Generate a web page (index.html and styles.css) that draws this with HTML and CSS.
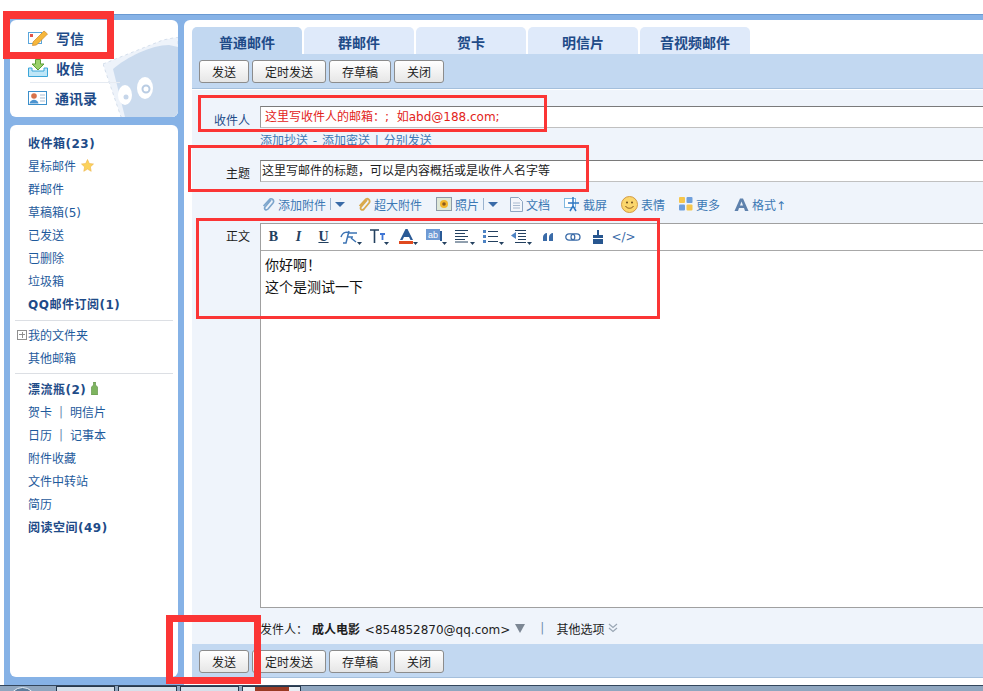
FILE: index.html
```html
<!DOCTYPE html>
<html lang="zh-CN">
<head>
  <meta charset="UTF-8">
  <title>写信</title>
  <link rel="stylesheet" href="styles.css">
</head>
<body>
  <div class="page">
    <div class="sidebar">
      <div class="quick">
        <svg class="stamp" width="75" height="80" viewBox="0 0 75 80">
          <path d="M0 27 L60 3 L75 0 V80 H18 Z" fill="#eef3fa" stroke="#d5dfec" stroke-dasharray="3 3"/>
          <path d="M10 32 C24 20 48 8 66 8 L75 10 V80 H22 Z" fill="#cbdbee"/>
          <ellipse cx="22" cy="58" rx="7" ry="10" fill="#fff"/>
          <ellipse cx="42" cy="51" rx="8" ry="11" fill="#fff"/>
          <circle cx="43" cy="52" r="3.500" fill="none" stroke="#b9cce3" stroke-width="2"/>
          <circle cx="23" cy="60" r="2.500" fill="#c6d6ea"/>
        </svg>
        <a class="quick-item">
          <svg width="20" height="16" viewBox="0 0 20 16">
            <rect x=".5" y="2.500" width="13" height="11" fill="#fff" stroke="#5aa6dc"/>
            <rect x="2" y="4" width="3" height="3" fill="#e2554a"/>
            <path d="M5 12 L16 1 L19.500 4 L8.500 15 L4.500 15.500 Z" fill="#f6b73c" stroke="#cf8a2a" stroke-width=".7"/>
          </svg>
          写信
        </a>
        <a class="quick-item">
          <svg width="20" height="18" viewBox="0 0 20 18">
            <path d="M.5 9 V17.500 H19.500 V9 H16 V12 H4 V9 Z" fill="#bfe6f7" stroke="#3ba6d9"/>
            <path d="M7.500 .5 H12.500 V5 H16 L10 11 L4 5 H7.500 Z" fill="#9ad06a" stroke="#5c9f36"/>
          </svg>
          收信
        </a>
        <div class="quick-line"></div>
        <a class="quick-item">
          <svg width="19" height="14" viewBox="0 0 19 14">
            <rect x=".5" y=".5" width="18" height="13" fill="#fff" stroke="#3b8fcb"/>
            <circle cx="6" cy="5" r="2.800" fill="#d8734a"/>
            <path d="M1.500 12.500 C2.500 7.500 9.500 7.500 10.500 12.500 Z" fill="#4d94d0"/>
            <path d="M12 4 H17 M12 7 H17 M12 10 H17" stroke="#a9bdd2"/>
          </svg>
          通讯录
        </a>
      </div>

      <div class="folders">
        <a class="folder bold">收件箱(23)</a>
        <a class="folder">星标邮件
          <svg width="13" height="13" viewBox="0 0 13 13"><path d="M6.500 .5 L8.300 4.500 L12.500 5 L9.400 7.900 L10.200 12.300 L6.500 10.100 L2.800 12.300 L3.600 7.900 L.5 5 L4.700 4.500 Z" fill="#fbd25c" stroke="#eeb44a" stroke-width=".6"/></svg>
        </a>
        <a class="folder">群邮件</a>
        <a class="folder">草稿箱(5)</a>
        <a class="folder">已发送</a>
        <a class="folder">已删除</a>
        <a class="folder">垃圾箱</a>
        <a class="folder bold">QQ邮件订阅(1)</a>
        <div class="divider"></div>
        <a class="folder tree"><span class="plus"></span>我的文件夹</a>
        <a class="folder">其他邮箱</a>
        <div class="divider low"></div>
        <a class="folder bold">漂流瓶(2)
          <svg width="7" height="13" viewBox="0 0 7 13"><path d="M2.500 0 H4.500 V3 L6.500 5 V13 H.5 V5 L2.500 3 Z" fill="#7eb45f" stroke="#58893f" stroke-width=".6"/></svg>
        </a>
        <a class="folder">贺卡<span class="sep">|</span>明信片</a>
        <a class="folder">日历<span class="sep">|</span>记事本</a>
        <a class="folder">附件收藏</a>
        <a class="folder">文件中转站</a>
        <a class="folder">简历</a>
        <a class="folder bold">阅读空间(49)</a>
      </div>
    </div>

    <div class="main">
      <div class="tabs">
        <a class="tab active">普通邮件</a>
        <a class="tab">群邮件</a>
        <a class="tab">贺卡</a>
        <a class="tab">明信片</a>
        <a class="tab">音视频邮件</a>
      </div>

      <div class="toolbar">
        <button class="btn w50">发送</button>
        <button class="btn w74">定时发送</button>
        <button class="btn w62">存草稿</button>
        <button class="btn w50">关闭</button>
      </div>

      <div class="form">
        <div class="row to-row">
          <label class="label">收件人</label>
          <div class="field red">这里写收件人的邮箱：; &nbsp;如abd@188.com;</div>
        </div>
        <div class="links">添加抄送 - 添加密送 | 分别发送</div>

        <div class="row subject-row">
          <label class="label dark">主题</label>
          <div class="field">这里写邮件的标题，可以是内容概括或是收件人名字等</div>
        </div>

        <div class="attach">
          <span class="att">
            <svg width="14" height="15" viewBox="0 0 14 15"><path d="M10 3 L4 10 C2.500 12 5 14 7 12 L12 6 C14 3 10 0 8 3 L2.500 9" fill="none" stroke="#7da5cc" stroke-width="1.600"/></svg>
            添加附件<span class="bar"></span><span class="down"></span>
          </span>
          <span class="att">
            <svg width="14" height="15" viewBox="0 0 14 15"><path d="M10 3 L4 10 C2.500 12 5 14 7 12 L12 6 C14 3 10 0 8 3 L2.500 9" fill="none" stroke="#d9aa4d" stroke-width="1.800"/></svg>
            超大附件
          </span>
          <span class="att">
            <svg width="16" height="14" viewBox="0 0 16 14"><rect x=".5" y=".5" width="15" height="13" fill="#dfe8d8" stroke="#8d9aa8"/><circle cx="8" cy="7" r="4" fill="#f3b72c"/><circle cx="8" cy="7" r="1.800" fill="#8a5a1e"/></svg>
            照片<span class="bar"></span><span class="down"></span>
          </span>
          <span class="att">
            <svg width="13" height="15" viewBox="0 0 13 15"><path d="M.5 .5 H8.500 L12.500 4.500 V14.500 H.5 Z" fill="#f3f6fb" stroke="#8ea6c2"/><path d="M3 6 H10 M3 8.500 H10 M3 11 H10" stroke="#a8b9cf"/></svg>
            文档
          </span>
          <span class="att">
            <svg width="16" height="15" viewBox="0 0 16 15"><rect x=".5" y="1.500" width="11" height="9" fill="#fff" stroke="#7fb8e0"/><path d="M9 0 V9 L6 14 M9 9 L12 14 M4 6 H15" fill="none" stroke="#2f77c2" stroke-width="1.500"/></svg>
            截屏
          </span>
          <span class="att">
            <svg width="17" height="17" viewBox="0 0 17 17"><circle cx="8.500" cy="8.500" r="8" fill="#fbd66c" stroke="#d29a45"/><circle cx="6" cy="6.500" r="1" fill="#6b4a1e"/><circle cx="11" cy="6.500" r="1" fill="#6b4a1e"/><path d="M4.500 10 C6 13 11 13 12.500 10" fill="none" stroke="#8a5a1e"/></svg>
            表情
          </span>
          <span class="att">
            <svg width="14" height="14" viewBox="0 0 14 14"><rect width="6" height="6" rx="1" fill="#f6c64c"/><rect x="7.500" width="6" height="6" rx="1" fill="#6f9fdc"/><rect y="7.500" width="6" height="6" rx="1" fill="#6f9fdc"/><rect x="7.500" y="7.500" width="6" height="6" rx="1" fill="#f6c64c"/></svg>
            更多
          </span>
          <span class="att">
            <svg width="15" height="13" viewBox="0 0 15 13"><path d="M.5 13 L6 .5 H9 L14.500 13 H11 L10 10 H5 L4 13 Z M6 7.500 H9 L7.500 3.500 Z" fill="#5f82ad" fill-rule="evenodd"/></svg>
            格式↑
          </span>
        </div>

        <div class="row body-row">
          <label class="label dark">正文</label>
          <div class="editor">
            <div class="edit-tools">
              <b class="tool serif">B</b>
              <i class="tool serif">I</i>
              <u class="tool serif">U</u>
              <span class="tool wide">
                <svg width="22" height="16" viewBox="0 0 22 16"><path d="M1 8 C3 2 8 3 10 4 H17 M9 2 L6 14 H3 M8 8 H13 M11 9 L16 13" fill="none" stroke="#3d74b4" stroke-width="1.500"/><path d="M17 13 H22 L19.500 16 Z" fill="#23405f"/></svg>
              </span>
              <span class="tool wide">
                <svg width="20" height="16" viewBox="0 0 20 16"><path d="M0 1 H9 M4.500 1 V14" fill="none" stroke="#23405f" stroke-width="1.600"/><path d="M10 5 H15 M12.500 5 V11" fill="none" stroke="#3d74d4" stroke-width="1.800"/><path d="M14 13 H19 L16.500 16 Z" fill="#23405f"/></svg>
              </span>
              <span class="tool mid">
                <svg width="20" height="16" viewBox="0 0 20 16"><path d="M2 11 L7.500 0 H9.500 L15 11 H12.500 L11 8 H6 L4.500 11 Z" fill="#2a5a96"/><rect x="1" y="12" width="14" height="3" fill="#e0491f"/><path d="M15 13 H20 L17.500 16 Z" fill="#23405f"/></svg>
              </span>
              <span class="tool wide">
                <svg width="21" height="16" viewBox="0 0 21 16"><rect width="14" height="11" fill="#6f9ad4"/><rect x="14" y="2" width="2" height="10" fill="#2a5a96"/><text x="2" y="9" font-size="9" fill="#fff" font-family="Liberation Sans">ab</text><path d="M16 13 H21 L18.500 16 Z" fill="#23405f"/></svg>
              </span>
              <span class="tool mid">
                <svg width="20" height="16" viewBox="0 0 20 16"><path d="M0 1.500 H13 M0 4.500 H10 M0 7.500 H13 M0 10.500 H10 M0 13 H13" stroke="#23405f"/><path d="M15 13 H20 L17.500 16 Z" fill="#23405f"/></svg>
              </span>
              <span class="tool mid">
                <svg width="21" height="16" viewBox="0 0 21 16"><path d="M0 1 H3 V4 H0 Z M0 6 H3 V9 H0 Z M0 11 H3 V14 H0 Z" fill="#4d83c4"/><path d="M5 2.500 H15 M5 7.500 H15 M5 12.500 H15" stroke="#23405f"/><path d="M16 13 H21 L18.500 16 Z" fill="#23405f"/></svg>
              </span>
              <span class="tool mid">
                <svg width="21" height="16" viewBox="0 0 21 16"><path d="M4 1.500 H15 M7 4.500 H15 M7 7.500 H15 M7 10.500 H15 M4 13.500 H15" stroke="#23405f"/><path d="M5 3 L0 6.500 L5 10 Z" fill="#4d83c4"/><path d="M16 13 H21 L18.500 16 Z" fill="#23405f"/></svg>
              </span>
              <span class="tool">
                <svg width="10" height="8" viewBox="0 0 10 8"><path d="M0 4 C0 2 2 0 4 0 V8 H0 Z M6 4 C6 2 8 0 10 0 V8 H6 Z" fill="#3a6ba8"/></svg>
              </span>
              <span class="tool">
                <svg width="16" height="8" viewBox="0 0 16 8"><rect x=".8" y=".8" width="9" height="6.400" rx="3.200" fill="none" stroke="#3a6ba8" stroke-width="1.300"/><rect x="6" y=".8" width="9" height="6.400" rx="3.200" fill="none" stroke="#3a6ba8" stroke-width="1.300"/></svg>
              </span>
              <span class="tool">
                <svg width="12" height="14" viewBox="0 0 12 14"><path d="M5 0 H7 V5 H11 V8 H1 V5 H5 Z M1 9 H11 V14 H1 Z" fill="#27568f"/></svg>
              </span>
              <span class="tool code">&lt;/&gt;</span>
            </div>
            <div class="edit-body">
              <div>你好啊！</div>
              <div>这个是测试一下</div>
            </div>
          </div>
        </div>

        <div class="sender">
          <span>发件人：<b>成人电影</b> &lt;854852870@qq.com&gt;</span>
          <span class="sender-down"></span>
          <span class="sender-sep">|</span>
          <span>其他选项</span>
          <svg width="10" height="10" viewBox="0 0 10 10"><path d="M1 1 L5 4.500 L9 1 M1 5 L5 8.500 L9 5" fill="none" stroke="#9aa6b4" stroke-width="1.200"/></svg>
        </div>
      </div>

      <div class="toolbar bottom">
        <button class="btn w50">发送</button>
        <button class="btn w74">定时发送</button>
        <button class="btn w62">存草稿</button>
        <button class="btn w50">关闭</button>
      </div>
    </div>
  </div>

  <div class="taskbar">
    <span class="orb"></span>
    <span class="task"></span>
    <span class="task"></span>
    <span class="task"></span>
    <span class="task current"></span>
  </div>

  <!-- red marks drawn over the screenshot -->
  <div class="mark m1"></div>
  <div class="mark m2"></div>
  <div class="mark m3"></div>
  <div class="mark m4"></div>
  <div class="mark m5"></div>
</body>
</html>
```

FILE: styles.css
```css
* {
  margin: 0;
  padding: 0;
  box-sizing: border-box;
}

html, body {
  height: 691px;
  overflow: hidden;
}

body {
  position: relative;
  display: flex;
  flex-direction: column;
  background-color: #fff;
  font-family: "DejaVu Sans", "Noto Sans CJK SC", sans-serif;
  font-size: 12px;
  color: #1d1d1d;
  padding-top: 14px;
  padding-left: 4px;
}

.page {
  display: flex;
  flex-shrink: 0;
  height: 671px;
  padding: 5px 0 0 6px;
  gap: 6px;
  background-color: #86b2e6;
  border-top: 1px solid #6a9ad2;
}

/* sidebar */
.sidebar {
  width: 168px;
  margin-bottom: 8px;
  display: flex;
  flex-direction: column;
  gap: 8px;
}

.quick {
  position: relative;
  flex-shrink: 0;
  height: 97px;
  padding: 3px 0 0 18px;
  background-color: #fff;
  border-radius: 6px;
  overflow: hidden;
}

.stamp {
  position: absolute;
  right: 0;
  bottom: 0;
}

.quick-item {
  position: relative;
  display: flex;
  align-items: center;
  height: 30px;
  font-size: 14px;
  font-weight: bold;
  color: #1e4b88;
}

.quick-item svg {
  margin-right: 8px;
}

.quick-line {
  position: relative;
  width: 90px;
  height: 1px;
  margin: -1px 0 0 2px;
  background-color: #e6ebf2;
}

.folders {
  flex: 1;
  padding: 6px 5px 0;
  background-color: #fff;
  border-radius: 6px;
}

.folder {
  display: flex;
  align-items: center;
  gap: 5px;
  height: 23px;
  padding-left: 13px;
  color: #1e5a9c;
}

.folder.bold {
  font-weight: bold;
  letter-spacing: .5px;
  color: #1e4b88;
}

.folder.tree {
  gap: 1px;
  padding-left: 2px;
}

.plus {
  width: 10px;
  height: 10px;
  border: 1px solid #8f8f8f;
  background:
    linear-gradient(#8f8f8f, #8f8f8f) center / 6px 1px no-repeat,
    linear-gradient(#8f8f8f, #8f8f8f) center / 1px 6px no-repeat;
}

.sep {
  margin: 0 2px;
  color: #6f8fb0;
}

.divider {
  height: 1px;
  margin: 5px 0 2px;
  background-color: #dcdfe4;
}

.divider.low {
  margin: 4px 0 3px;
}

/* main column */
.main {
  flex: 1;
  display: flex;
  flex-direction: column;
  padding: 7px 0 7px 8px;
  background-color: #fff;
  border-radius: 6px 0 0 0;
}

.tabs {
  display: flex;
  flex-shrink: 0;
  gap: 2px;
  height: 27px;
}

.tab {
  width: 110px;
  text-align: center;
  line-height: 32px;
  font-size: 14px;
  font-weight: bold;
  color: #1e4b88;
  background-color: #dfeafa;
  border-radius: 5px 5px 0 0;
}

.tab.active {
  background-color: #c2d8f1;
}

.toolbar {
  display: flex;
  flex-shrink: 0;
  gap: 3px;
  height: 35px;
  padding: 6px 0 0 7px;
  background-color: #c2d8f1;
  border-bottom: 1px solid #a4bfdc;
}

.toolbar.bottom {
  height: 34px;
}

.btn {
  height: 23px;
  font-family: inherit;
  font-size: 12px;
  color: #1d1d1d;
  background: linear-gradient(#fff, #e6e6e6);
  border: 1px solid #8c8c8c;
  border-radius: 3px;
}

.w50 { width: 50px; }
.w62 { width: 62px; }
.w74 { width: 74px; }

/* form */
.form {
  flex: 1;
  display: flex;
  flex-direction: column;
  padding-top: 16px;
  background-color: #eff4fb;
  border-top: 1px solid #fff;
}

.form > * {
  flex-shrink: 0;
}

.row {
  display: flex;
  height: 22px;
}

.label {
  width: 58px;
  margin-right: 10px;
  text-align: right;
  color: #1e4b88;
}

.label.dark {
  color: #1d1d1d;
}

.to-row .label {
  line-height: 30px;
}

.subject-row .label {
  line-height: 28px;
}

.field {
  flex: 1;
  height: 22px;
  padding-left: 4px;
  line-height: 20px;
  background-color: #fff;
  border-top: 1px solid #7a7a7a;
  border-bottom: 1px solid #c0c0c0;
  border-left: 1px solid #9a9a9a;
  white-space: nowrap;
}

.subject-row .field {
  padding-left: 1px;
}

.red {
  color: #e2231a;
}

.links {
  height: 32px;
  padding: 5px 0 0 68px;
  line-height: 16px;
  word-spacing: 1px;
  color: #3c78b4;
}

.attach {
  display: flex;
  align-items: center;
  gap: 14px;
  height: 41px;
  padding: 3px 0 0 69px;
  color: #3c78b4;
}

.att {
  display: flex;
  align-items: center;
  gap: 3px;
}

.bar {
  width: 1px;
  height: 12px;
  margin: 0 1px;
  background-color: #9ab3cf;
}

.down {
  width: 0;
  height: 0;
  margin-right: -2px;
  border: 5px solid transparent;
  border-top: 5px solid #3a6ba8;
  border-bottom: 0;
}

.body-row {
  height: 385px;
}

.body-row .label {
  padding-top: 4px;
}

.editor {
  flex: 1;
  display: flex;
  flex-direction: column;
  background-color: #fff;
  border: 1px solid #a0a0a0;
  border-right: 0;
}

.edit-tools {
  display: flex;
  align-items: center;
  height: 27px;
  border-bottom: 1px solid #a8a8a8;
}

.tool {
  display: flex;
  align-items: center;
  justify-content: center;
  width: 25px;
  color: #23405f;
}

.tool.mid {
  width: 28px;
}

.tool.wide {
  width: 29px;
}

.serif {
  font-family: "Liberation Serif", serif;
  font-size: 14px;
  font-weight: bold;
}

.code {
  width: 27px;
  color: #3a6ba8;
}

.edit-body {
  flex: 1;
  padding: 3px 4px;
  font-size: 14px;
  line-height: 22px;
  color: #111;
}

.sender {
  display: flex;
  align-items: center;
  height: 36px;
  padding: 4px 0 0 68px;
}

.sender b {
  margin: 0 1px 0 4px;
}

.sender-down {
  width: 0;
  height: 0;
  margin-left: 5px;
  border: 5px solid transparent;
  border-top: 9px solid #7c8794;
  border-bottom: 0;
}

.sender-sep {
  margin: 0 12px 0 15px;
  color: #6f8fb0;
}

.sender svg {
  margin-left: 4px;
}

/* bottom bar */
.taskbar {
  display: flex;
  flex: 1;
  gap: 3px;
  margin-left: -4px;
  padding-left: 56px;
  background-color: #8fa6bf;
  border-top: 1px solid #33465c;
  position: relative;
}

.orb {
  position: absolute;
  left: 9px;
  top: 1px;
  width: 27px;
  height: 27px;
  border: 1px solid #e6eef6;
  border-radius: 50%;
  background-color: #5e7d9c;
}

.task {
  width: 59px;
  background-color: #d6e0ea;
  border: 1px solid #26384c;
  border-bottom: 0;
}

.task.current {
  background: linear-gradient(#9a3a24, #9a3a24) center / 34px 100% no-repeat, #e8eef4;
}

/* red boxes */
.mark {
  position: absolute;
  border: 3px solid #fb3535;
}

.m1 {
  left: 3px;
  top: 11px;
  width: 111px;
  height: 48px;
  border-width: 8px 7px 7px 7px;
}

.m2 {
  left: 198px;
  top: 95px;
  width: 349px;
  height: 37px;
}

.m3 {
  left: 188px;
  top: 145px;
  width: 401px;
  height: 47px;
}

.m4 {
  left: 196px;
  top: 218px;
  width: 464px;
  height: 101px;
}

.m5 {
  left: 166px;
  top: 615px;
  width: 95px;
  height: 69px;
  border-width: 7px;
}
```
